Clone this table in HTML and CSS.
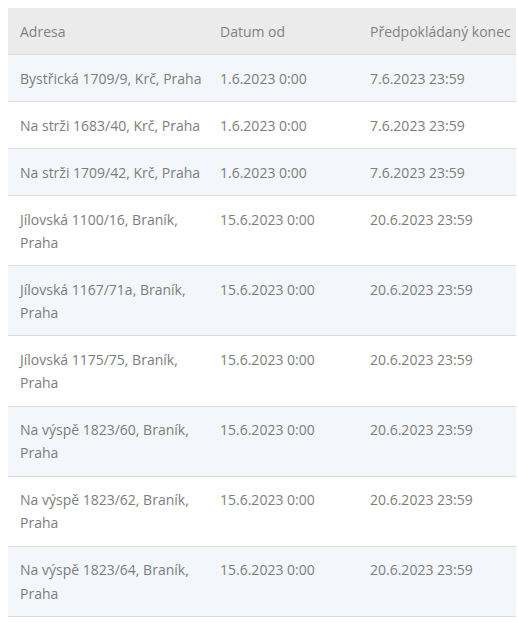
FILE: index.html
```html
<!DOCTYPE html>
<html lang="cs">
<head>
<meta charset="utf-8">
<link rel="stylesheet" href="styles.css">
</head>
<body>
<table class="tbl">
  <colgroup>
    <col class="c1"><col class="c2"><col class="c3">
  </colgroup>
  <thead>
    <tr><th>Adresa</th><th>Datum od</th><th>Předpokládaný konec</th></tr>
  </thead>
  <tbody>
    <tr><td>Bystřická 1709/9, Krč, Praha</td><td>1.6.2023 0:00</td><td>7.6.2023 23:59</td></tr>
    <tr><td>Na strži 1683/40, Krč, Praha</td><td>1.6.2023 0:00</td><td>7.6.2023 23:59</td></tr>
    <tr><td>Na strži 1709/42, Krč, Praha</td><td>1.6.2023 0:00</td><td>7.6.2023 23:59</td></tr>
    <tr><td>Jílovská 1100/16, Braník, Praha</td><td>15.6.2023 0:00</td><td>20.6.2023 23:59</td></tr>
    <tr><td>Jílovská 1167/71a, Braník, Praha</td><td>15.6.2023 0:00</td><td>20.6.2023 23:59</td></tr>
    <tr><td>Jílovská 1175/75, Braník, Praha</td><td>15.6.2023 0:00</td><td>20.6.2023 23:59</td></tr>
    <tr><td>Na výspě 1823/60, Braník, Praha</td><td>15.6.2023 0:00</td><td>20.6.2023 23:59</td></tr>
    <tr><td>Na výspě 1823/62, Braník, Praha</td><td>15.6.2023 0:00</td><td>20.6.2023 23:59</td></tr>
    <tr><td>Na výspě 1823/64, Braník, Praha</td><td>15.6.2023 0:00</td><td>20.6.2023 23:59</td></tr>
  </tbody>
</table>
</body>
</html>
```
FILE: styles.css
```css
html, body {
  margin: 0;
  padding: 0;
  background: #fff;
}
body {
  padding: 8px 0 0 8px;
  font-family: "Open Sans", "Liberation Sans", sans-serif;
  font-size: 14px;
  color: #7d7d7d;
}
.tbl {
  width: 508px;
  table-layout: fixed;
  border-collapse: collapse;
}
.c1 { width: 200px; }
.c2 { width: 150px; }
.c3 { width: 158px; }
.tbl th,
.tbl td {
  text-align: left;
  vertical-align: top;
  font-weight: 400;
  line-height: 23.2px;
  padding: 11.6px 0 11.2px 12px;
  border-bottom: 1px solid #dcdcdc;
}
.tbl thead th {
  background: #ebebeb;
  color: #828282;
}
.tbl tbody tr:nth-child(odd) td {
  background: #f3f6fb;
}
.tbl tbody tr:nth-child(even) td {
  background: #fff;
}
```
